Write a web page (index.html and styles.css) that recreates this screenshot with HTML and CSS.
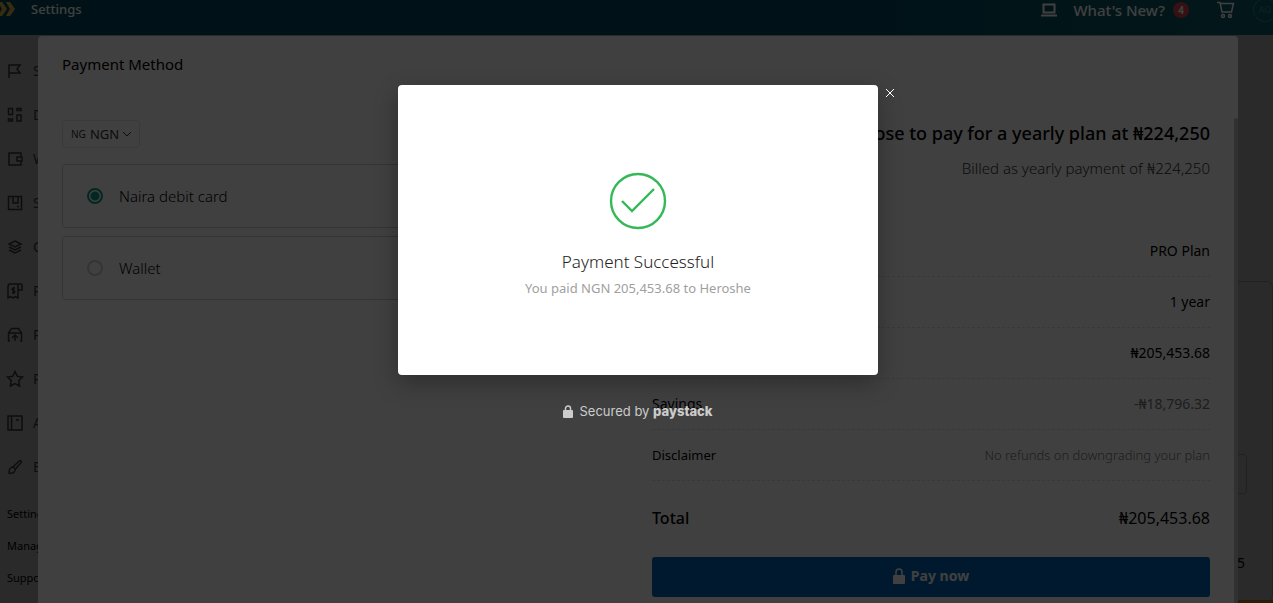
FILE: index.html
```html
<!DOCTYPE html>
<html lang="en">
  <head>
    <meta charset="UTF-8" />
    <meta name="viewport" content="width=device-width, initial-scale=1.0" />
    <title>Settings</title>
    <link rel="stylesheet" href="styles.css" />
  </head>
  <body>
    <header class="topbar">
      <svg class="logo" viewBox="0 0 16 14"><path d="M-2 0h4l5 7-5 7h-4l4-7zM6 0h4l5 7-5 7H6l4-7z" /></svg>
      <h1>Settings</h1>
      <nav class="topbar-nav">
        <svg class="icon" viewBox="0 0 16 16"><path d="M2.500 2.500h11v8h-11zM0 13.500h16" /></svg>
        <a href="#" class="whats-new">What's New?</a>
        <span class="badge">4</span>
        <svg class="icon cart" viewBox="0 0 18 18"><path d="M0 1.500h3l2 9.500h9.500l2-8.500H3.500" /><circle cx="6" cy="15" r="1.500" /><circle cx="13" cy="15" r="1.500" /></svg>
        <span class="avatar">AO</span>
      </nav>
    </header>

    <div class="layout">
      <aside class="sidebar">
        <ul class="menu">
          <li><svg class="icon" viewBox="0 0 16 16"><path d="M2 15V2h11l-3 4 3 4H2" /></svg><a href="#">Start</a></li>
          <li><svg class="icon" viewBox="0 0 16 16"><path d="M1.500 1.500h4v6h-4zM10 1.500h4v2h-4zM10 8h4v6h-4zM1.500 12h4v2h-4z" /></svg><a href="#">Dashboard</a></li>
          <li><svg class="icon" viewBox="0 0 16 16"><path d="M14 5V2H2v12h12v-3M10 6h5v4h-5z" /></svg><a href="#">Wallet</a></li>
          <li><svg class="icon" viewBox="0 0 16 16"><path d="M1.500 1.500h13v13h-13zM6 2v6h5V2M10 11.500h2" /></svg><a href="#">Shipments</a></li>
          <li><svg class="icon" viewBox="0 0 16 16"><path d="M8 2l6 3-6 3-6-3zM2 8l6 3 6-3M2 11l6 3 6-3" /></svg><a href="#">Orders</a></li>
          <li><svg class="icon" viewBox="0 0 16 16"><path d="M11 1H3Q1 1 1 4v11l2.500-1.500L6 15l2.500-1.500L11 15zM11 1h3q1 0 1 1v5h-4M8 5H6Q4.500 6.500 6 7.500h1Q8.500 9 7 10H5M6.500 4v7" /></svg><a href="#">Payments</a></li>
          <li><svg class="icon" viewBox="0 0 16 16"><path d="M3 14H1.500V6l3-4.500h7l3 4.500v8H13M2 6h12M8 14V8M5 11l3-3 3 3" /></svg><a href="#">Pickups</a></li>
          <li><svg class="icon" viewBox="0 0 16 16"><path d="M8 .500l2.300 4.800 5.200.700-3.800 3.600.900 5.400L8 12.500 3.400 15l.900-5.400L.500 6l5.200-.700z" /></svg><a href="#">Points</a></li>
          <li><svg class="icon" viewBox="0 0 16 16"><path d="M1 1h14v14H1zM4.500 1v14M9 5h3" /></svg><a href="#">Address</a></li>
          <li><svg class="icon" viewBox="0 0 16 16"><path d="M6 8l6-6q2-1 2.500 1l-6 7zM6 8q-4 0-4 6 6 1 6.500-4z" /></svg><a href="#">Branding</a></li>
        </ul>
        <ul class="links">
          <li><a href="#">Settings</a></li>
          <li><a href="#">Manage</a></li>
          <li><a href="#">Support</a></li>
        </ul>
      </aside>
      <main class="page">
        <section class="page-card">
          <div class="page-field"></div>
        </section>
        <p class="page-count">5</p>
        <div class="page-chat"></div>
      </main>
    </div>

    <div class="mask"></div>

    <section class="drawer">
      <h2>Payment Method</h2>
      <div class="columns">
        <form class="methods">
          <button type="button" class="currency">
            <small>NG</small> NGN
            <svg viewBox="0 0 8 6"><path d="M0 1l4 4 4-4" /></svg>
          </button>
          <label class="method"><input type="radio" name="method" checked /> Naira debit card</label>
          <label class="method"><input type="radio" name="method" /> Wallet</label>
        </form>
        <div class="summary">
          <p class="plan">You chose to pay for a yearly plan at ₦224,250</p>
          <p class="billed">Billed as yearly payment of ₦224,250</p>
          <dl>
            <div class="row"><dt>Plan</dt><dd>PRO Plan</dd></div>
            <div class="row"><dt>Duration</dt><dd>1 year</dd></div>
            <div class="row"><dt>Amount</dt><dd>₦205,453.68</dd></div>
            <div class="row"><dt>Savings</dt><dd class="muted">-₦18,796.32</dd></div>
            <div class="row small"><dt>Disclaimer</dt><dd class="muted">No refunds on downgrading your plan</dd></div>
            <div class="row total"><dt>Total</dt><dd>₦205,453.68</dd></div>
          </dl>
          <button type="button" class="pay">
            <svg viewBox="0 0 12 16"><path class="shackle" d="M3 8V4a3 3 0 0 1 6 0v4" /><rect y="7" width="12" height="9" rx="1" /></svg>
            Pay now
          </button>
        </div>
      </div>
      <div class="scrollbar"></div>
    </section>

    <div class="checkout">
      <div class="checkout-box">
        <div class="receipt" role="dialog" aria-label="Payment Successful">
          <svg class="tick" viewBox="0 0 56 56"><circle cx="28" cy="28" r="27" /><path d="M12 28l10 10 22-22" /></svg>
          <h3>Payment Successful</h3>
          <p>You paid NGN 205,453.68 to Heroshe</p>
        </div>
        <button type="button" class="close" aria-label="Close">
          <svg viewBox="0 0 8 8"><path d="M0 0l8 8M8 0L0 8" /></svg>
        </button>
      </div>
      <p class="secured">
        <svg viewBox="0 0 10 13"><path class="shackle" d="M2.500 6V3.500a2.500 2.500 0 0 1 5 0V6" /><rect y="5" width="10" height="8" rx="1" /></svg>
        <span>Secured by <b>paystack</b></span>
      </p>
    </div>
  </body>
</html>
```

FILE: styles.css
```css
* {
  box-sizing: border-box;
}
body {
  margin: 0;
  height: 100vh;
  overflow: hidden;
  background-color: #fff;
  color: #000;
  font-family: "Noto Sans", sans-serif;
  font-size: 14px;
  line-height: 20px;
}
h1, h2, h3, p, ul, dl, dd {
  margin: 0;
  padding: 0;
  font-weight: 400;
}
ul {
  list-style: none;
}
a {
  color: inherit;
  text-decoration: none;
}
button {
  font: inherit;
  cursor: pointer;
}
svg {
  overflow: visible;
  fill: none;
  stroke: currentColor;
}

/* top bar */
.topbar {
  display: flex;
  align-items: flex-start;
  height: 35px;
  background: linear-gradient(90deg, #004a5e 70%, #0f5c68);
  color: #fff;
}
.logo {
  width: 16px;
  height: 14px;
  margin-top: 2px;
  fill: #e0b040;
  stroke: none;
}
.topbar h1 {
  margin-left: 15px;
  font-size: 13px;
  font-weight: 500;
  line-height: 18px;
}
.topbar-nav {
  display: flex;
  align-items: center;
  height: 20px;
  margin-left: auto;
  margin-right: -4px;
}
.icon {
  flex: none;
  width: 16px;
  height: 16px;
  stroke-width: 1.5;
}
.topbar .icon {
  stroke-width: 2;
}
.whats-new {
  margin-left: 16px;
  font-size: 15px;
  font-weight: 500;
  line-height: 18px;
}
.badge {
  width: 16px;
  height: 16px;
  margin-left: 8px;
  border-radius: 50%;
  background-color: #d8404c;
  font-size: 10px;
  font-weight: 700;
  line-height: 16px;
  text-align: center;
}
.topbar .cart {
  width: 18px;
  height: 18px;
  margin-left: 28px;
  stroke-width: 1.5;
}
.avatar {
  width: 24px;
  height: 24px;
  margin-left: 18px;
  border: 1px solid #209088;
  border-radius: 50%;
  color: #209088;
  font-size: 9px;
  line-height: 22px;
  text-align: center;
}

/* page under the drawer */
.layout {
  display: flex;
  height: calc(100vh - 35px);
}
.sidebar {
  width: 200px;
  padding: 14px 7px;
}
.menu li {
  display: flex;
  align-items: center;
  gap: 10px;
  height: 44px;
  color: #555;
}
.links {
  padding-top: 9px;
}
.links li {
  height: 32px;
  font-size: 11px;
  line-height: 32px;
}
.page {
  flex: 1;
  position: relative;
  padding-top: 246px;
}
.page-card {
  height: 320px;
  padding: 172px 25px 0 0;
  border-top: 1px solid #d0d0d0;
  border-right: 1px solid #d0d0d0;
  border-radius: 6px;
}
.page-field {
  height: 40px;
  border: 1px solid #ccc;
  border-radius: 3px;
}
.page-count {
  position: absolute;
  right: 28px;
  bottom: 30px;
}
.page-chat {
  position: absolute;
  right: 0;
  bottom: 0;
  width: 36px;
  height: 3px;
  border-radius: 8px 0 0 0;
  background-color: #f5b92e;
}
.mask {
  position: absolute;
  inset: 35px 0 0;
  background-color: rgba(0, 0, 0, 0.35);
}

/* payment drawer */
.drawer {
  position: absolute;
  inset: 36px 35px 0 38px;
  padding: 17px 28px 0 24px;
  overflow: hidden;
  border-radius: 4px 4px 0 0;
  background-color: #fff;
}
.drawer h2 {
  font-size: 15px;
  line-height: 22px;
}
.columns {
  display: grid;
  grid-template-columns: 1fr 1fr;
  gap: 32px;
  margin-top: 45px;
}
.currency {
  display: flex;
  align-items: center;
  gap: 4px;
  height: 28px;
  margin-bottom: 16px;
  padding: 0 8px;
  border: 1px solid #e4e4e4;
  border-radius: 4px;
  background: none;
  color: #333;
  font-size: 13px;
}
.currency small {
  font-size: 10px;
}
.currency svg {
  width: 8px;
  height: 6px;
}
.method {
  display: flex;
  align-items: center;
  gap: 16px;
  height: 64px;
  margin-bottom: 8px;
  padding: 0 24px;
  border: 1px solid #d0d0d0;
  border-radius: 3px;
  font-size: 15px;
  font-weight: 300;
}
.method input {
  appearance: none;
  width: 16px;
  height: 16px;
  margin: 0;
  border: 2px solid #d0d0d0;
  border-radius: 50%;
}
.method input:checked {
  border-color: #159a89;
  background: radial-gradient(#159a89 4px, transparent 5px);
}
.summary {
  min-width: 0;
}
.plan,
.billed {
  text-align: right;
  white-space: nowrap;
}
.plan {
  font-size: 18px;
  font-weight: 500;
  line-height: 26px;
}
.billed {
  margin-top: 12px;
  color: #333;
  font-size: 15px;
  font-weight: 300;
}
.summary dl {
  margin-top: 48px;
}
.row {
  display: flex;
  align-items: center;
  justify-content: space-between;
  height: 51px;
  border-bottom: 1px dashed #e2e2e2;
}
.row.small {
  font-size: 13px;
}
.muted {
  color: #777;
}
.small .muted {
  font-weight: 300;
}
.row.total {
  height: 76px;
  padding-bottom: 2px;
  border: none;
  font-size: 16px;
  font-weight: 500;
}
.pay {
  display: flex;
  align-items: center;
  justify-content: center;
  gap: 6px;
  width: 100%;
  height: 40px;
  padding: 0 0 2px;
  border: none;
  border-radius: 3px;
  background-color: #0066b8;
  color: #fff;
  font-weight: 700;
}
.pay svg {
  width: 12px;
  height: 16px;
}
rect {
  fill: currentColor;
  stroke: none;
}
.shackle {
  stroke-width: 1.5;
}
.scrollbar {
  position: absolute;
  top: 82px;
  right: 0;
  bottom: 0;
  width: 4px;
  border-radius: 4px 4px 0 0;
  background-color: #c4c4c4;
}

/* checkout popup */
.checkout {
  position: absolute;
  inset: 0;
  display: flex;
  flex-direction: column;
  align-items: center;
  padding: 85px 0 0 3px;
  background-color: rgba(0, 0, 0, 0.75);
  color: #ccc;
}
.checkout-box {
  position: relative;
  width: 480px;
}
.receipt {
  display: flex;
  flex-direction: column;
  align-items: center;
  height: 290px;
  padding-top: 88px;
  border-radius: 4px;
  background-color: #fff;
  box-shadow: 0 8px 24px rgba(0, 0, 0, 0.3);
}
.tick {
  width: 56px;
  height: 56px;
  stroke: #35b958;
  stroke-width: 2.4;
}
.receipt h3 {
  margin-top: 20px;
  color: #222;
  font-size: 17px;
  font-weight: 300;
  line-height: 26px;
}
.receipt p {
  margin-top: 3px;
  color: #a0a0a0;
  font-size: 13px;
}
.close {
  position: absolute;
  top: 0;
  left: 100%;
  display: flex;
  margin: 4px 0 0 8px;
  padding: 0;
  border: none;
  background: none;
  color: #fff;
}
.close svg {
  width: 8px;
  height: 8px;
}
.secured {
  display: flex;
  align-items: center;
  gap: 6px;
  margin-top: 26px;
  font-family: Inter, sans-serif;
  font-size: 13px;
}
.secured svg {
  width: 10px;
  height: 13px;
}
.secured b {
  font-weight: 800;
}
```
